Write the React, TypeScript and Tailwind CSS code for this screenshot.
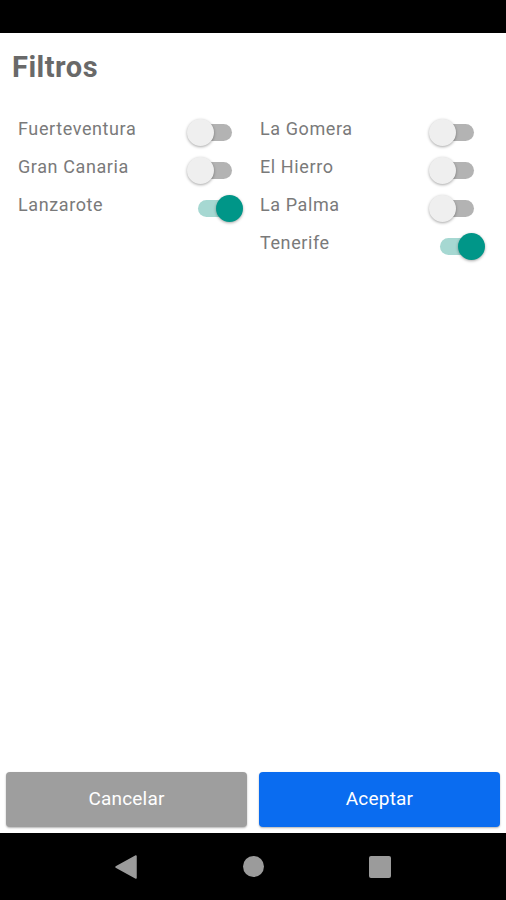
import React from "react";

const islandsLeft = [
  { name: "Fuerteventura", on: false },
  { name: "Gran Canaria", on: false },
  { name: "Lanzarote", on: true },
];

const islandsRight = [
  { name: "La Gomera", on: false },
  { name: "El Hierro", on: false },
  { name: "La Palma", on: false },
  { name: "Tenerife", on: true },
];

function Toggle({ on }: { on: boolean }) {
  return (
    <div className="relative mt-[7px] h-[28px] w-[56px] shrink-0">
      {/* Track */}
      <div
        className={
          on
            ? "absolute left-[11px] top-[5px] h-[17px] w-[34px] rounded-full bg-[#a6d8d2]"
            : "absolute left-[11px] top-[5px] h-[17px] w-[34px] rounded-full bg-[#b3b3b3]"
        }
      />
      {/* Thumb */}
      <div
        className={
          on
            ? "absolute left-[29px] top-0 h-[27px] w-[27px] rounded-full bg-[#009688] shadow-[0_1px_3px_rgba(0,0,0,0.35)]"
            : "absolute left-0 top-0 h-[27px] w-[27px] rounded-full bg-[#efefef] shadow-[0_1px_3px_rgba(0,0,0,0.35)]"
        }
      />
    </div>
  );
}

function IslandRow({ name, on }: { name: string; on: boolean }) {
  return (
    <div className="flex h-[38px] items-center justify-between">
      <span className="text-[18px] leading-[38px] tracking-[0.6px] text-[#7a7a7a]">{name}</span>
      <Toggle on={on} />
    </div>
  );
}

export default function App() {
  return (
    <div
      className="flex h-[900px] w-[506px] flex-col bg-white"
      style={{ fontFamily: "Roboto, 'Noto Sans', sans-serif" }}
    >
      {/* Status bar */}
      <div className="h-[33px] bg-black" />

      {/* Content */}
      <div className="flex-1">
        <h1 className="pl-[12px] pt-[17px] text-[29px] font-bold leading-[34px] tracking-[0.5px] text-[#696969]">
          Filtros
        </h1>

        <div className="mt-[26px] flex gap-[17px] pl-[18px]">
          <div className="flex w-[225px] flex-col">
            {islandsLeft.map((i) => (
              <IslandRow key={i.name} name={i.name} on={i.on} />
            ))}
          </div>
          <div className="flex w-[225px] flex-col">
            {islandsRight.map((i) => (
              <IslandRow key={i.name} name={i.name} on={i.on} />
            ))}
          </div>
        </div>
      </div>

      {/* Actions */}
      <div className="flex gap-[12px] px-[6px] pb-[6px]">
        <button className="h-[55px] flex-1 rounded-[4px] bg-[#9e9e9e] text-[19px] tracking-[0.2px] text-white shadow-[0_1px_2px_rgba(0,0,0,0.3)]">
          Cancelar
        </button>
        <button className="h-[55px] flex-1 rounded-[4px] bg-[#0a6cf0] text-[19px] tracking-[0.2px] text-white shadow-[0_1px_2px_rgba(0,0,0,0.3)]">
          Aceptar
        </button>
      </div>

      {/* Navigation bar */}
      <div className="flex h-[67px] items-center justify-center bg-black">
        <div className="flex w-[127px] items-center justify-center">
          <svg width="22" height="24" viewBox="0 0 22 24">
            <path d="M21 1 L21 23 L1 12 Z" fill="#9b9b9b" stroke="#9b9b9b" strokeWidth="1.5" strokeLinejoin="round" />
          </svg>
        </div>
        <div className="flex w-[127px] items-center justify-center">
          <div className="h-[21px] w-[21px] rounded-full bg-[#9b9b9b]" />
        </div>
        <div className="flex w-[127px] items-center justify-center">
          <div className="h-[22px] w-[22px] rounded-[2px] bg-[#9b9b9b]" />
        </div>
      </div>
    </div>
  );
}
